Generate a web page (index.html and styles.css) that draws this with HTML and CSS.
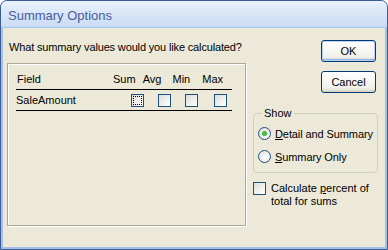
FILE: index.html
```html
<!DOCTYPE html>
<html lang="en">
<head>
    <meta charset="UTF-8">
    <title>Summary Options</title>
    <link rel="stylesheet" href="styles.css">
</head>
<body>
    <div class="window">
        <div class="titlebar">Summary Options</div>

        <div class="content">
            <div class="main">
                <p class="prompt">What summary values would you like calculated?</p>

                <div class="fields">
                    <div class="row head">
                        <span class="name">Field</span>
                        <span class="col">Sum</span>
                        <span class="col">Avg</span>
                        <span class="col">Min</span>
                        <span class="col">Max</span>
                    </div>
                    <div class="row item">
                        <span class="name">SaleAmount</span>
                        <span class="boxes">
                            <span class="check focus"></span>
                            <span class="check"></span>
                            <span class="check"></span>
                            <span class="check"></span>
                        </span>
                    </div>
                </div>
            </div>

            <div class="side">
                <button class="btn default">OK</button>
                <button class="btn">Cancel</button>

                <div class="group">
                    <span class="group-label">Show</span>
                    <div class="options">
                        <div class="option"><span class="radio on"></span><span><u>D</u>etail and Summary</span></div>
                        <div class="option"><span class="radio"></span><span><u>S</u>ummary Only</span></div>
                    </div>
                </div>

                <div class="percent">
                    <span class="check"></span>
                    <span>Calculate <u>p</u>ercent of<br>total for sums</span>
                </div>
            </div>
        </div>
    </div>
</body>
</html>
```

FILE: styles.css
```css
body {
    margin: 0;
    width: 388px;
    height: 250px;
    background: #ffffff;
    font-family: "Liberation Sans", Arial, sans-serif;
    font-size: 11px;
    color: #000000;
}

.window {
    box-sizing: border-box;
    width: 388px;
    height: 250px;
    border: 1px solid #3d5d92;
    border-radius: 7px 7px 0 0;
    background: #a3bfea;
    display: flex;
    flex-direction: column;
    overflow: hidden;
}

.titlebar {
    height: 26px;
    padding-left: 7px;
    line-height: 29px;
    font-size: 13px;
    color: #4a5c9c;
    background: linear-gradient(#eaf1fb, #d6e4f7 60%, #c9dbf4);
    border-bottom: 1px solid #a6c3ec;
}

.content {
    flex: 1;
    margin: 0 2px 2px 2px;
    background: #ece9d8;
    display: flex;
}

.main {
    margin-left: 4px;
    width: 239px;
    flex: none;
}

.prompt {
    margin: 12px 0 0 2px;
    line-height: 14px;
    height: 14px;
    white-space: nowrap;
    letter-spacing: -0.15px;
}

.fields {
    box-sizing: border-box;
    height: 163px;
    margin-top: 9px;
    border: 1px solid #aca899;
    box-shadow: inset 1px 1px 0 #ffffff, 1px 1px 0 #ffffff;
    padding: 6px 0 0 8px;
}

.row {
    width: 216px;
    display: flex;
    align-items: center;
    border-bottom: 1px solid #000000;
}

.head {
    height: 18px;
    padding-bottom: 1px;
}

.head .name {
    width: 100px;
    padding-left: 1px;
}

.head .col {
    width: 31px;
}

.item {
    height: 20px;
}

.item .name {
    width: 115px;
}

.boxes {
    display: flex;
    gap: 14px;
}

.boxes .check:last-child {
    margin-left: 2px;
}

.check {
    box-sizing: border-box;
    width: 13px;
    height: 13px;
    border: 1px solid #1c5180;
    background: linear-gradient(135deg, #dcdcd7, #ffffff);
    flex: none;
}

.check.focus {
    outline: 1px dotted #000000;
    outline-offset: -3px;
}

.side {
    margin-left: 7px;
    width: 125px;
    display: flex;
    flex-direction: column;
}

.btn {
    align-self: flex-end;
    margin-right: 2px;
    width: 55px;
    height: 22px;
    border: 1px solid #003c74;
    border-radius: 3px;
    background: linear-gradient(#ffffff, #f0f0ea 80%, #d6d0c5);
    font-family: "Liberation Sans", Arial, sans-serif;
    font-size: 11px;
    color: #000000;
    padding: 0;
}

.btn.default {
    margin-top: 12px;
    box-shadow: inset 0 0 0 1px #b9d1f6, inset 0 -1px 0 1px #8db2e3;
}

.btn + .btn {
    margin-top: 9px;
}

.group {
    box-sizing: border-box;
    height: 60px;
    margin-top: 20px;
    padding-left: 4px;
    border: 1px solid #d0d0bf;
    border-radius: 4px;
    display: flex;
    flex-direction: column;
}

.group-label {
    align-self: flex-start;
    margin: -7px 0 0 4px;
    padding: 0 2px;
    line-height: 13px;
    background: #ece9d8;
}

.options {
    margin-top: 2px;
    letter-spacing: -0.1px;
}

.option {
    display: flex;
    align-items: center;
    gap: 4px;
    height: 23px;
}

.radio {
    box-sizing: border-box;
    width: 13px;
    height: 13px;
    border: 1px solid #1c5180;
    border-radius: 50%;
    background: radial-gradient(circle at 60% 60%, #ffffff, #dcdcd7);
    display: flex;
    align-items: center;
    justify-content: center;
}

.radio.on::after {
    content: "";
    width: 5px;
    height: 5px;
    border-radius: 50%;
    background: radial-gradient(circle, #55d051, #21a121);
}

.percent {
    margin-top: 9px;
    display: flex;
    gap: 5px;
    line-height: 13px;
}
```
